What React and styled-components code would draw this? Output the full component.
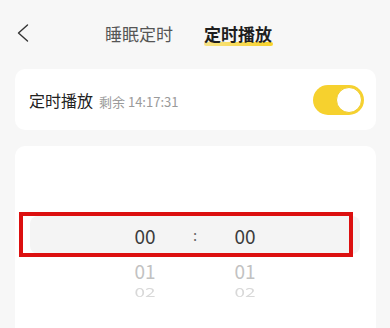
import React from 'react'
import styled, { createGlobalStyle } from 'styled-components'

const GlobalStyle = createGlobalStyle`
  html, body {
    margin: 0;
    padding: 0;
    background: #f7f7f7;
    font-family: "Noto Sans CJK SC", "Noto Sans", sans-serif;
  }
`

export default function App() {
  return (
    <Page>
      <GlobalStyle />
      <Header>
        <BackButton aria-label="返回">
          <svg width="12" height="18" viewBox="0 0 12 18" fill="none">
            <polyline points="10.5,1 1.5,9 10.5,17" stroke="#333" strokeWidth="1.4" strokeLinecap="round" strokeLinejoin="round" />
          </svg>
        </BackButton>
        <Tabs>
          <Tab>睡眠定时</Tab>
          <Tab active>定时播放</Tab>
        </Tabs>
      </Header>

      <Card>
        <Label>
          定时播放
          <Remain>剩余 14:17:31</Remain>
        </Label>
        <Switch>
          <Knob />
        </Switch>
      </Card>

      <PickerCard>
        <Wheel>
          <SelectedRow>
            <Cell>00</Cell>
            <Colon>:</Colon>
            <Cell>00</Cell>
          </SelectedRow>
          <Row depth={1}>
            <Cell>01</Cell>
            <Colon />
            <Cell>01</Cell>
          </Row>
          <Row depth={2}>
            <Cell>02</Cell>
            <Colon />
            <Cell>02</Cell>
          </Row>
        </Wheel>
        <Highlight />
      </PickerCard>
    </Page>
  )
}

const Page = styled.div`
  width: 390px;
  height: 328px;
  overflow: hidden;
  padding: 0 14px 0 15px;
  box-sizing: border-box;
`

const Header = styled.div`
  height: 69px;
  display: flex;
  align-items: center;
  position: relative;
  padding-bottom: 2px;
  box-sizing: border-box;
`

const BackButton = styled.button`
  border: 0;
  background: none;
  padding: 0;
  margin-left: 2px;
  display: flex;
  width: 12px;
  height: 18px;
  margin-top: -1px;
`

const Tabs = styled.div`
  display: flex;
  gap: 31px;
  margin-left: 76px;
`

const Tab = styled.div`
  position: relative;
  isolation: isolate;
  font-size: 17px;
  line-height: 24px;
  color: ${p => (p.active ? '#1e1e1e' : '#555')};
  font-weight: ${p => (p.active ? 700 : 400)};

  &::after {
    content: '';
    display: ${p => (p.active ? 'block' : 'none')};
    position: absolute;
    left: 0;
    right: -1px;
    bottom: 0;
    height: 4px;
    border-radius: 3px;
    background: linear-gradient(90deg, rgba(248, 214, 60, 0.6), rgba(248, 208, 30, 0.95));
    filter: blur(0.7px);
    z-index: -1;
  }
`

const Card = styled.div`
  background: #fff;
  border-radius: 10px;
  height: 61px;
  display: flex;
  align-items: center;
  justify-content: space-between;
  padding: 0 12px 0 14px;
  box-sizing: border-box;
`

const Label = styled.div`
  font-size: 16px;
  color: #222;
  display: flex;
  align-items: baseline;
  gap: 6px;
`

const Remain = styled.span`
  font-size: 13px;
  color: #9a9a9a;
`

const Switch = styled.div`
  width: 51px;
  height: 30px;
  border-radius: 15px;
  background: #f6d12e;
  display: flex;
  align-items: center;
  justify-content: flex-end;
  padding: 2px;
  box-sizing: border-box;
`

const Knob = styled.div`
  width: 26px;
  height: 26px;
  border-radius: 50%;
  background: #fff;
  box-sizing: border-box;
  border: 1.5px solid #f0cc2a;
`

const PickerCard = styled.div`
  position: relative;
  margin-top: 16px;
  background: #fff;
  border-radius: 10px;
  height: 220px;
  padding: 70px 16px 0 15px;
  box-sizing: border-box;
`

const Wheel = styled.div`
  display: flex;
  flex-direction: column;
`

const SelectedRow = styled.div`
  display: grid;
  grid-template-columns: repeat(3, 50px);
  justify-content: center;
  align-items: center;
  height: 38px;
  border-radius: 8px;
  background: #f4f4f4;
  color: #3c3c3c;
  font-size: 19px;
`

const Row = styled.div`
  display: grid;
  grid-template-columns: repeat(3, 50px);
  justify-content: center;
  align-items: center;
  height: ${p => (p.depth === 1 ? 32 : 16)}px;
  font-size: 19px;
  color: ${p => (p.depth === 1 ? '#c2c2c2' : '#d8d8d8')};
  transform: scaleY(${p => (p.depth === 1 ? 1 : 0.62)});
  transform-origin: top center;
`

const Cell = styled.span`
  text-align: center;
  line-height: 1;
`

const Colon = styled.span`
  text-align: center;
  font-size: 15px;
  color: #666;
  line-height: 1;
  margin-top: -2px;
`

const Highlight = styled.div`
  position: absolute;
  left: 4px;
  top: 66px;
  width: 334px;
  height: 45px;
  border: 4px solid #dc1010;
  box-sizing: border-box;
  pointer-events: none;
`
